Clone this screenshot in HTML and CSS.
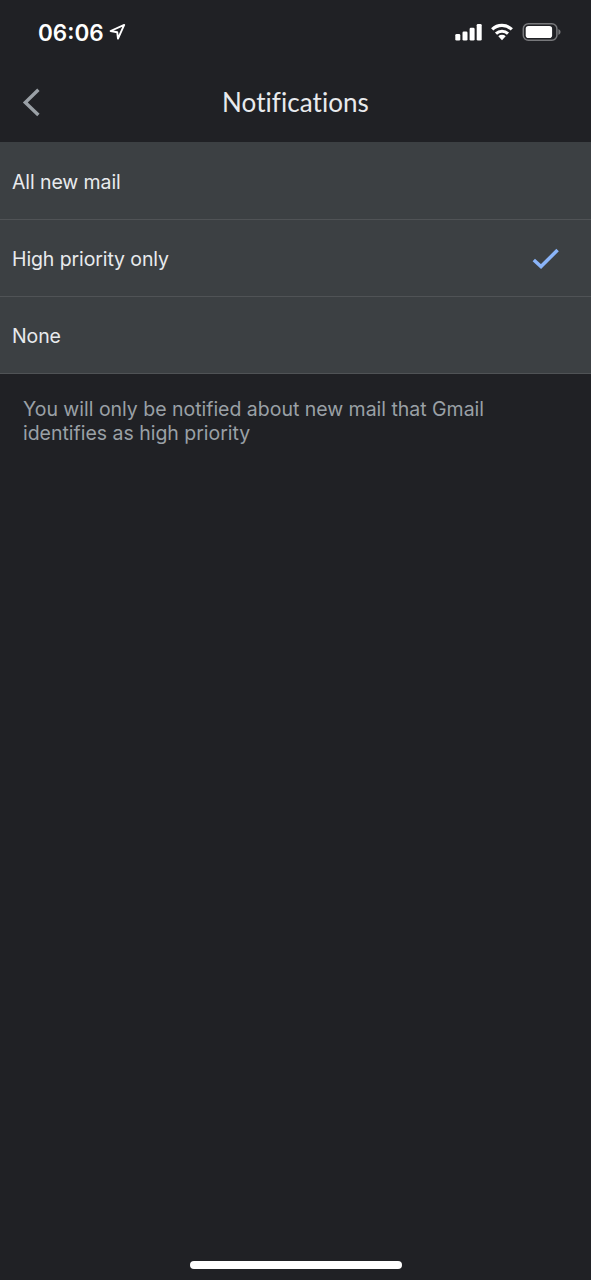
FILE: index.html
```html
<!DOCTYPE html>
<html lang="en">
<head>
    <meta charset="UTF-8">
    <meta name="viewport" content="width=device-width, initial-scale=1.0">
    <title>Notifications</title>
    <link rel="stylesheet" href="styles.css">
</head>
<body>
    <div class="status-bar">
        <div class="status-time">
            <span class="clock">06:06</span>
            <svg class="location" width="18" height="18" viewBox="0 0 18 18">
                <path d="M1.6 8 L15.2 1.9 L9 15.6 L8.2 9.2 Z" fill="none" stroke="#fff" stroke-width="1.9" stroke-linejoin="round"/>
            </svg>
        </div>
        <div class="status-icons">
            <svg width="27" height="18" viewBox="0 0 27 18" fill="#fff">
                <rect x="0.3" y="11" width="5" height="6.5" rx="1.3"/>
                <rect x="7.5" y="8.5" width="5" height="9" rx="1.3"/>
                <rect x="14.6" y="4.8" width="5" height="12.7" rx="1.3"/>
                <rect x="21.7" y="0.9" width="5" height="16.6" rx="1.3"/>
            </svg>
            <svg width="22" height="18" viewBox="0 0 22 18">
                <path d="M1.2 6.4 A14 14 0 0 1 20.8 6.4" fill="none" stroke="#fff" stroke-width="3.2"/>
                <path d="M5 10.6 A8.6 8.6 0 0 1 17 10.6" fill="none" stroke="#fff" stroke-width="3"/>
                <path d="M7.3 13.3 A5.4 5.4 0 0 1 14.7 13.3 L11 17.2 Z" fill="#fff"/>
            </svg>
            <svg width="39" height="18" viewBox="0 0 39 18">
                <rect x="1.3" y="0.8" width="33.6" height="16.4" rx="5" fill="none" stroke="#77787b" stroke-width="1.5"/>
                <rect x="3.7" y="3" width="26.4" height="12" rx="2.8" fill="#fff"/>
                <path d="M36.4 6 Q38.6 7 38.6 9 Q38.6 11 36.4 12 Z" fill="#77787b"/>
            </svg>
        </div>
    </div>

    <div class="nav-bar">
        <svg class="back" width="20" height="32" viewBox="0 0 20 32">
            <path d="M18.4 2.8 L5.3 15.4 L18.4 28" fill="none" stroke="#9aa0a6" stroke-width="3.4"/>
        </svg>
        <h1>Notifications</h1>
    </div>

    <ul class="options">
        <li class="option">All new mail</li>
        <li class="option">
            High priority only
            <svg width="28" height="22" viewBox="0 0 28 22">
                <path d="M2.8 12 L10 18.6 L26.6 2" fill="none" stroke="#8ab4f8" stroke-width="3.5"/>
            </svg>
        </li>
        <li class="option">None</li>
    </ul>

    <p class="description">You will only be notified about new mail that Gmail identifies as high priority</p>

    <div class="home-indicator"></div>
</body>
</html>
```

FILE: styles.css
```css
* {
    box-sizing: border-box;
}
body {
    margin: 0;
    height: 1280px;
    display: flex;
    flex-direction: column;
    background: #202125;
    color: #e8eaed;
    font-family: Inter, "Liberation Sans", sans-serif;
    overflow: hidden;
}
.status-bar {
    height: 64px;
    padding: 0 30px 0 38px;
    display: flex;
    justify-content: space-between;
    align-items: center;
}
.status-time {
    display: flex;
    align-items: center;
    gap: 5px;
}
.clock {
    color: #fff;
    font-size: 22.5px;
    font-weight: 600;
}
.status-icons {
    display: flex;
    align-items: center;
    gap: 9px;
}
.nav-bar {
    height: 78px;
    padding: 0 20px;
    display: grid;
    grid-template-columns: 20px 1fr 20px;
    align-items: center;
}
.nav-bar h1 {
    margin: 0;
    padding-bottom: 2px;
    font-family: Lato, sans-serif;
    font-size: 26px;
    font-weight: 400;
    font-variant-ligatures: none;
    letter-spacing: 0.05px;
    text-align: center;
}
.options {
    margin: 0;
    padding: 0;
    list-style: none;
    background: #3c4043;
}
.option {
    height: 77px;
    padding: 1px 32px 0 12px;
    display: flex;
    justify-content: space-between;
    align-items: center;
    border-bottom: 1px solid #505356;
    font-size: 19.5px;
    letter-spacing: -0.1px;
}
.option:first-child {
    height: 78px;
    padding-top: 2px;
}
.option:last-child {
    padding-top: 2px;
}
.description {
    margin: 23px 85px 0 23px;
    color: #9aa0a6;
    font-size: 19.5px;
    line-height: 24px;
    letter-spacing: -0.02px;
}
.home-indicator {
    width: 212px;
    height: 8px;
    margin: auto auto 11px;
    border-radius: 4px;
    background: #fff;
}
```
